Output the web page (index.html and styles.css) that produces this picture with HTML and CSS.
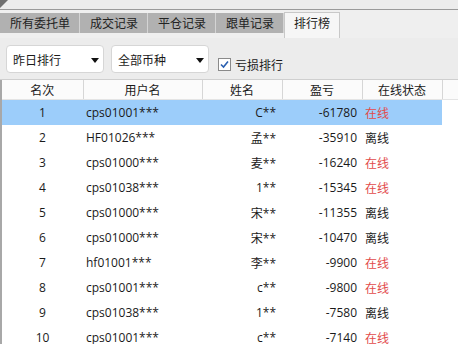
FILE: index.html
```html
<!DOCTYPE html>
<html lang="zh-CN">
<head>
  <meta charset="UTF-8" />
  <title>排行榜</title>
  <link rel="stylesheet" href="styles.css">
</head>
<body>
  <div class="top-strip"><span class="corner"></span></div>

  <!-- tabs -->
  <div class="tabs">
    <div class="tab">所有委托单</div>
    <div class="tab">成交记录</div>
    <div class="tab">平仓记录</div>
    <div class="tab">跟单记录</div>
    <div class="tab active">排行榜</div>
  </div>

  <!-- filters -->
  <div class="toolbar">
    <div class="select" style="width: 98px">昨日排行<span class="arrow"></span></div>
    <div class="select" style="width: 98px">全部币种<span class="arrow"></span></div>
    <label class="check">
      <svg width="13" height="13" viewBox="0 0 13 13">
        <rect x="0.5" y="0.5" width="12" height="12" fill="#fff" stroke="#8a8a8a" />
        <path d="M3 6.5 L5.5 9 L10 3.5" fill="none" stroke="#2a5fb0" stroke-width="1.6" />
      </svg>
      亏损排行
    </label>
  </div>

  <table class="rank">
    <colgroup>
      <col style="width: 82px">
      <col style="width: 119px">
      <col style="width: 80px">
      <col style="width: 80px">
      <col style="width: 80px">
      <col>
    </colgroup>
    <thead>
      <tr><th>名次</th><th>用户名</th><th>姓名</th><th>盈亏</th><th>在线状态</th><th class="blank"></th></tr>
    </thead>
    <tbody id="rows"></tbody>
  </table>

  <script>
    const rows = [
      ["cps01001***", "C**", -61780, true],
      ["HF01026***", "孟**", -35910, false],
      ["cps01000***", "麦**", -16240, true],
      ["cps01038***", "1**", -15345, true],
      ["cps01000***", "宋**", -11355, false],
      ["cps01000***", "宋**", -10470, false],
      ["hf01001***", "李**", -9900, true],
      ["cps01001***", "c**", -9800, true],
      ["cps01038***", "1**", -7580, false],
      ["cps01001***", "c**", -7140, true],
    ];

    const tbody = document.getElementById("rows");
    tbody.innerHTML = rows
      .map(
        (r, i) => `
        <tr class="${i === 0 ? "selected" : ""}">
          <td class="num">${i + 1}</td>
          <td class="user">${r[0]}</td>
          <td class="name">${r[1]}</td>
          <td class="pnl">${r[2]}</td>
          <td class="status ${r[3] ? "online" : ""}">${r[3] ? "在线" : "离线"}</td>
          <td class="blank"></td>
        </tr>`
      )
      .join("");
  </script>
</body>
</html>
```

FILE: styles.css
```css
body {
  margin: 0;
  width: 458px;
  height: 344px;
  overflow: hidden;
  font-family: "Open Sans", "Noto Sans CJK SC", sans-serif;
  font-size: 12px;
  color: #1a1a1a;
  background: #fff;
}
.top-strip {
  position: relative;
  height: 9px;
  background: #ececec;
  border-bottom: 1px solid #9a9a9a;
}
.corner {
  position: absolute;
  left: 0;
  top: 0;
  width: 0;
  height: 0;
  border-top: 8px solid #6f6f6f;
  border-right: 8px solid transparent;
}
.tabs {
  display: flex;
  align-items: flex-start;
  height: 28px;
  padding-top: 3px;
  background: #efefef;
  box-sizing: border-box;
}
.tab {
  height: 20px;
  line-height: 20px;
  padding: 0 9px 0 10px;
  white-space: nowrap;
  background: #b1b1b1;
  border-right: 1px solid #d4d4d4;
  color: #222;
  font-family: "Noto Sans CJK SC", sans-serif;
}
.tab.active {
  height: 25px;
  padding: 0 9px;
  background: #f6f6f6;
  border: 1px solid #c8c8c8;
  border-bottom: none;
  margin-top: -1px;
}
.toolbar {
  display: flex;
  align-items: center;
  gap: 7px;
  height: 41px;
  padding: 0 6px;
  background: #ececec;
  border-bottom: 1px solid #cfcfcf;
}
.select {
  position: relative;
  height: 28px;
  line-height: 28px;
  box-sizing: border-box;
  padding-left: 6px;
  background: #fff;
  border: 1px solid #d6d6d6;
  border-radius: 4px;
  font-family: "Noto Sans CJK SC", sans-serif;
}
.arrow {
  position: absolute;
  right: 4px;
  top: 12px;
  width: 0;
  height: 0;
  border-left: 4px solid transparent;
  border-right: 4px solid transparent;
  border-top: 5px solid #111;
}
.check {
  display: flex;
  align-items: center;
  gap: 4px;
  margin-top: 11px;
  margin-left: 2px;
  font-family: "Noto Sans CJK SC", sans-serif;
}
.rank {
  width: 458px;
  border-collapse: collapse;
  table-layout: fixed;
  border-left: 2px solid #a8a8a8;
}
.rank th {
  height: 19px;
  padding: 0;
  font-weight: normal;
  font-family: "Noto Sans CJK SC", sans-serif;
  background: #fbfbfb;
  border-right: 1px solid #d6d6d6;
  border-bottom: 1px solid #e4e4e4;
}
.rank th.blank {
  border-right: none;
}
.rank td {
  height: 25px;
  padding: 0;
  white-space: nowrap;
}
.rank tr.selected td {
  background: #9ccdfa;
}
.rank tr.selected td.blank {
  background: #fff;
}
.num {
  text-align: center;
}
.user {
  padding-left: 3px !important;
}
.name {
  text-align: right;
  padding-right: 6px !important;
}
.pnl {
  text-align: right;
  padding-right: 5px !important;
}
.status {
  padding-left: 3px !important;
  font-family: "Noto Sans CJK SC", sans-serif;
}
.status.online {
  color: #e24b4b;
}
```
